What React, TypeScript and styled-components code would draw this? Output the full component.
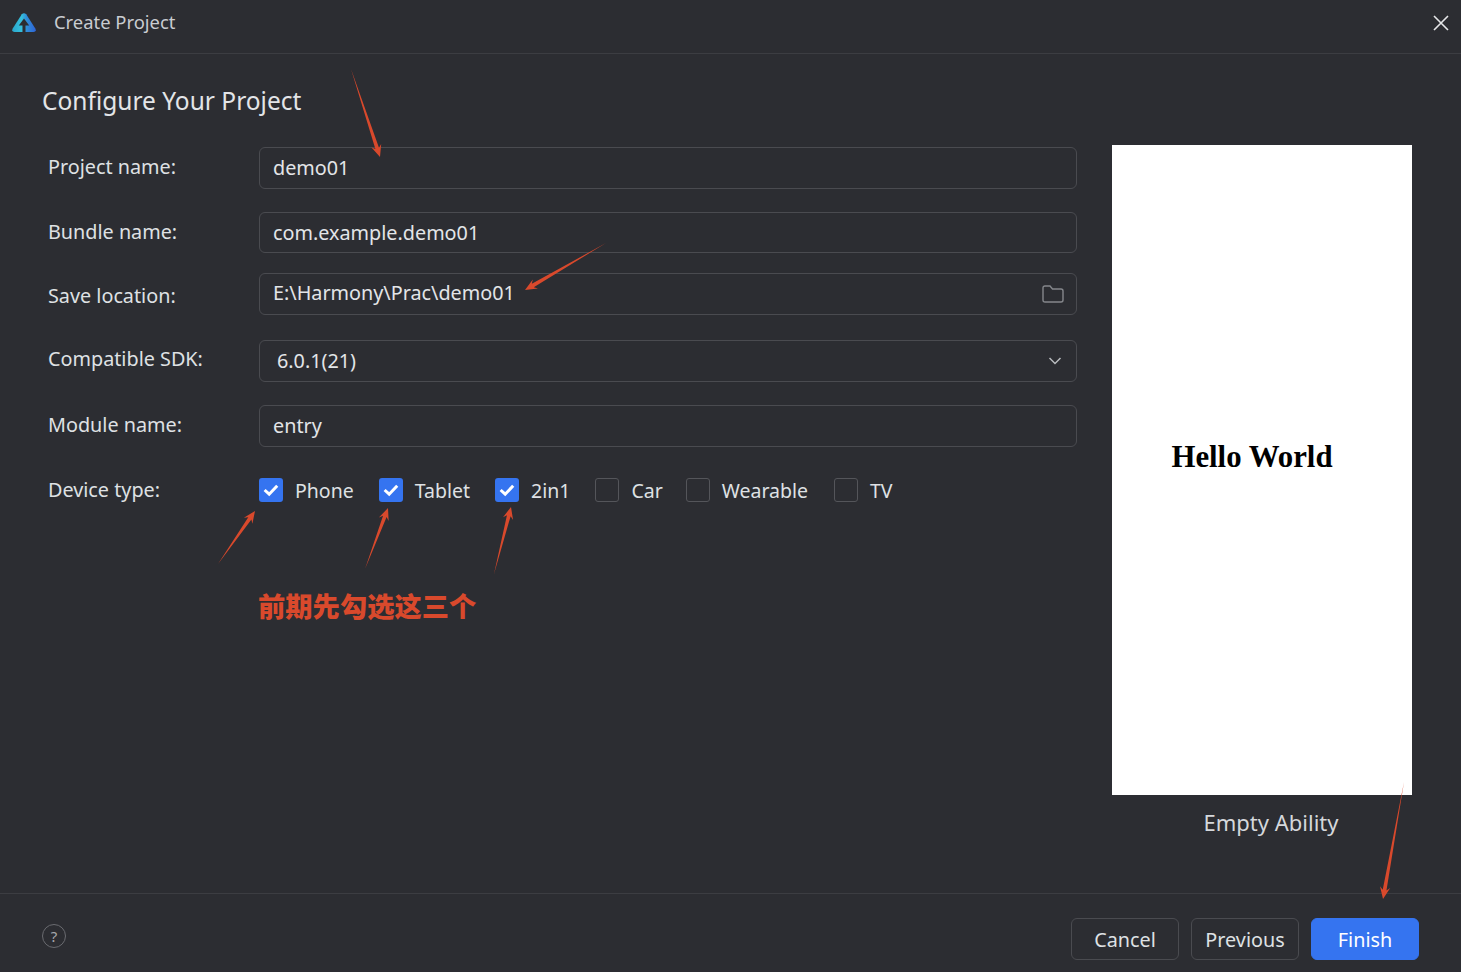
import {FC} from 'react';
import styled, {createGlobalStyle} from 'styled-components';

const GlobalStyle = createGlobalStyle`
  html, body {
    margin: 0;
    padding: 0;
    background: #2c2d32;
  }
  * {
    box-sizing: border-box;
  }
`;

const Dialog = styled.div`
  position: relative;
  width: 1461px;
  height: 972px;
  overflow: hidden;
  display: flex;
  flex-direction: column;
  background: #2c2d32;
  color: #e3e5e8;
  font-family: 'Noto Sans', 'Open Sans', 'Noto Sans CJK SC', sans-serif;
`;

const TitleBar = styled.header`
  flex: none;
  height: 54px;
  padding: 0 11px 8px 12px;
  display: flex;
  align-items: center;
  border-bottom: 1px solid #3c3d42;
`;

const WindowTitle = styled.span`
  margin-left: 18px;
  padding-bottom: 2px;
  flex: 1;
  font-size: 18.4px;
  color: #c9ccd1;
`;

const CloseButton = styled.button`
  width: 18px;
  height: 18px;
  padding: 0;
  border: 0;
  background: none;
  color: #e6e7e9;
  display: flex;
`;

const Body = styled.main`
  flex: 1;
  display: flex;
  padding: 0 49px 0 42px;
`;

const ConfigColumn = styled.section`
  width: 1070px;
  flex: none;
  padding-right: 35px;
`;

const Heading = styled.h1`
  margin: 29px 0 0;
  height: 36px;
  font-size: 24.5px;
  line-height: 36px;
  font-weight: 400;
  color: #e3e5e8;
`;

const Form = styled.div`
  display: flex;
  flex-direction: column;
  padding-left: 6px;
  margin-top: 28px;
`;

const Row = styled.div<{$top?: number; $height?: number}>`
  display: flex;
  align-items: center;
  height: ${(p) => p.$height ?? 42}px;
  margin-top: ${(p) => p.$top ?? 0}px;
`;

const Label = styled.label<{$up?: number; $down?: number}>`
  width: 211px;
  flex: none;
  font-size: 19.8px;
  color: #dfe1e4;
  padding-top: ${(p) => p.$down ?? 0}px;
  padding-bottom: ${(p) => p.$up ?? 0}px;
`;

const Field = styled.div<{$inset?: number}>`
  flex: 1;
  height: 100%;
  display: flex;
  align-items: center;
  justify-content: space-between;
  padding: 0 14px 0 ${(p) => p.$inset ?? 13}px;
  border: 1px solid #4a4b50;
  border-radius: 6px;
  font-size: 19.8px;
  color: #e3e5e8;
`;

const FieldText = styled.span<{$lift?: number}>`
  padding-bottom: ${(p) => p.$lift ?? 2}px;
`;

const FolderIcon = styled.svg`
  margin-right: -2px;
`;

const DeviceList = styled.div`
  display: flex;
  align-items: center;
`;

const DeviceOption = styled.div<{$gap: number}>`
  display: flex;
  align-items: center;
  margin-right: ${(p) => p.$gap}px;
  font-size: 19.5px;
  color: #dfe1e4;
`;

const Check = styled.span<{$on?: boolean}>`
  width: 24px;
  height: 24px;
  margin-right: 12px;
  border-radius: 3px;
  display: flex;
  align-items: center;
  justify-content: center;
  background: ${(p) => (p.$on ? '#3574f0' : 'transparent')};
  border: ${(p) => (p.$on ? '0' : '1px solid #54555a')};
`;

const Note = styled.p`
  margin: 85px 0 0 210px;
  font-family: 'Noto Sans CJK SC', sans-serif;
  font-size: 27.3px;
  line-height: 36px;
  font-weight: 900;
  color: #d9492c;
`;

const PreviewColumn = styled.aside`
  width: 300px;
  flex: none;
  padding-top: 91px;
`;

const PreviewScreen = styled.div`
  width: 300px;
  height: 650px;
  background: #fff;
  display: flex;
  justify-content: center;
  padding: 293px 20px 0 0;
  font-family: 'Liberation Serif', serif;
  font-size: 30.8px;
  line-height: 38px;
  font-weight: 700;
  color: #000;
`;

const PreviewCaption = styled.div`
  width: 300px;
  margin-top: 11px;
  padding-left: 18px;
  text-align: center;
  font-size: 22px;
  line-height: 32px;
  color: #d5d8dc;
`;

const Footer = styled.footer`
  flex: none;
  height: 79px;
  padding: 24px 42px 12px;
  display: flex;
  align-items: center;
  justify-content: flex-end;
  gap: 12px;
  border-top: 1px solid #3c3d42;
`;

const HelpButton = styled.span`
  width: 24px;
  height: 24px;
  margin: 0 auto 6px 0;
  border: 1px solid #6a6b70;
  border-radius: 50%;
  display: flex;
  align-items: center;
  justify-content: center;
  font-size: 15px;
  color: #a6a8ad;
`;

const ActionButton = styled.button<{$primary?: boolean}>`
  width: 108px;
  height: 42px;
  border-radius: 6px;
  border: 1px solid ${(p) => (p.$primary ? '#3574f0' : '#4a4b50')};
  background: ${(p) => (p.$primary ? '#3574f0' : 'transparent')};
  color: ${(p) => (p.$primary ? '#fff' : '#dfe1e4')};
  font-family: inherit;
  font-size: 19.8px;
  padding: 0;
`;

const Annotations = styled.svg`
  position: absolute;
  inset: 0;
  pointer-events: none;
`;

const Logo: FC = () => (
  <svg width="24" height="20" viewBox="0 0 24 20">
    <defs>
      <linearGradient id="logoFill" x1="0" y1="0" x2="1" y2="0">
        <stop offset="0" stopColor="#2aa6cc" />
        <stop offset="0.4" stopColor="#35bfdc" />
        <stop offset="0.6" stopColor="#2f8fd8" />
        <stop offset="1" stopColor="#2f63d6" />
      </linearGradient>
    </defs>
    <path
      d="M9.8 1.2 Q12 -0.6 14.2 1.2 L23.3 15.5 Q24.8 19 21.5 19 H2.5 Q-0.8 19 0.7 15.5 Z"
      fill="url(#logoFill)"
    />
    <path d="M12 5.5 L17.2 12.5 H13.5 V19.5 H10.5 V12.5 H6.8 Z" fill="#2c2d32" />
  </svg>
);

const Tick: FC = () => (
  <svg width="16" height="14" viewBox="0 0 16 14">
    <path d="M1.6 7 L6.2 11.2 L14.2 2.8" fill="none" stroke="#fff" strokeWidth="3" />
  </svg>
);

const Arrow: FC<{tail: [number, number]; tip: [number, number]}> = ({tail, tip}) => {
  const dx = tip[0] - tail[0];
  const dy = tip[1] - tail[1];
  const len = Math.hypot(dx, dy);
  const ux = dx / len;
  const uy = dy / len;
  const nx = -uy;
  const ny = ux;
  const at = (back: number, side: number) =>
    `${tip[0] - ux * back + nx * side},${tip[1] - uy * back + ny * side}`;
  return (
    <polygon
      points={[
        `${tail[0]},${tail[1]}`,
        at(9, 1.9),
        at(12, 5.2),
        `${tip[0]},${tip[1]}`,
        at(12, -5.2),
        at(9, -1.9),
      ].join(' ')}
      fill="#d9492c"
    />
  );
};

const devices = [
  {name: 'Phone', on: true, gap: 25},
  {name: 'Tablet', on: true, gap: 25},
  {name: '2in1', on: true, gap: 25},
  {name: 'Car', on: false, gap: 23},
  {name: 'Wearable', on: false, gap: 26},
  {name: 'TV', on: false, gap: 0},
];

const App: FC = () => (
  <>
    <GlobalStyle />
    <Dialog>
      <TitleBar>
        <Logo />
        <WindowTitle>Create Project</WindowTitle>
        <CloseButton aria-label="close">
          <svg width="18" height="18" viewBox="0 0 18 18">
            <path d="M2 2 L16 16 M16 2 L2 16" stroke="currentColor" strokeWidth="1.6" />
          </svg>
        </CloseButton>
      </TitleBar>
      <Body>
        <ConfigColumn>
          <Heading>Configure Your Project</Heading>
          <Form>
            <Row>
              <Label $up={4}>Project name:</Label>
              <Field>
                <FieldText>demo01</FieldText>
              </Field>
            </Row>
            <Row $top={23} $height={41}>
              <Label $up={2}>Bundle name:</Label>
              <Field>
                <FieldText $lift={0}>com.example.demo01</FieldText>
              </Field>
            </Row>
            <Row $top={20}>
              <Label $down={2}>Save location:</Label>
              <Field>
                <FieldText $lift={4}>E:\Harmony\Prac\demo01</FieldText>
                <FolderIcon width="22" height="18" viewBox="0 0 22 18">
                  <path
                    d="M1 3 Q1 1 3 1 H8 L10.5 4 H19 Q21 4 21 6 V15 Q21 17 19 17 H3 Q1 17 1 15 Z"
                    fill="none"
                    stroke="#85878c"
                    strokeWidth="1.4"
                  />
                </FolderIcon>
              </Field>
            </Row>
            <Row $top={25}>
              <Label $up={6}>Compatible SDK:</Label>
              <Field $inset={17}>
                <FieldText>6.0.1(21)</FieldText>
                <svg width="14" height="10" viewBox="0 0 14 10">
                  <path d="M1.5 2 L7 7.5 L12.5 2" fill="none" stroke="#b9bbbf" strokeWidth="1.5" />
                </svg>
              </Field>
            </Row>
            <Row $top={23}>
              <Label $up={4}>Module name:</Label>
              <Field>
                <FieldText>entry</FieldText>
              </Field>
            </Row>
            <Row $top={31} $height={24}>
              <Label $up={2}>Device type:</Label>
              <DeviceList>
                {devices.map((d) => (
                  <DeviceOption key={d.name} $gap={d.gap}>
                    <Check $on={d.on}>{d.on && <Tick />}</Check>
                    {d.name}
                  </DeviceOption>
                ))}
              </DeviceList>
            </Row>
            <Note>前期先勾选这三个</Note>
          </Form>
        </ConfigColumn>
        <PreviewColumn>
          <PreviewScreen>Hello World</PreviewScreen>
          <PreviewCaption>Empty Ability</PreviewCaption>
        </PreviewColumn>
      </Body>
      <Footer>
        <HelpButton>?</HelpButton>
        <ActionButton>Cancel</ActionButton>
        <ActionButton>Previous</ActionButton>
        <ActionButton $primary>Finish</ActionButton>
      </Footer>
      <Annotations width="1461" height="972" viewBox="0 0 1461 972">
        <Arrow tail={[351, 69]} tip={[380, 157]} />
        <Arrow tail={[606, 243]} tip={[525, 290]} />
        <Arrow tail={[218, 564]} tip={[255, 511]} />
        <Arrow tail={[365, 569]} tip={[388, 508]} />
        <Arrow tail={[494, 574]} tip={[511, 507]} />
        <Arrow tail={[1404, 782]} tip={[1383, 899]} />
      </Annotations>
    </Dialog>
  </>
);

export default App;
